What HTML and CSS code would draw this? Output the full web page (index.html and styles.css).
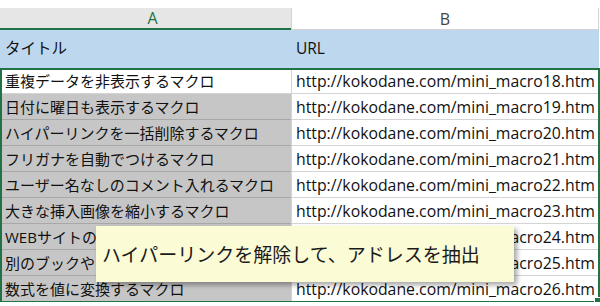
FILE: index.html
```html
<!DOCTYPE html>
<html lang="ja">

<head>
	<meta charset="UTF-8">
	<meta name="viewport" content="width=device-width, initial-scale=1.0">
	<title>ミニマクロ一覧</title>
	<link rel="stylesheet" href="styles.css">
</head>

<body>
	<div class="sheet">
		<div class="col-head col-a">A</div>
		<div class="col-head col-b">B</div>

		<div class="cell title">タイトル</div>
		<div class="cell title col-b">URL</div>

		<div class="cell active">重複データを非表示するマクロ</div>
		<div class="cell col-b">http://kokodane.com/mini_macro18.htm</div>
		<div class="cell sel">日付に曜日も表示するマクロ</div>
		<div class="cell col-b">http://kokodane.com/mini_macro19.htm</div>
		<div class="cell sel">ハイパーリンクを一括削除するマクロ</div>
		<div class="cell col-b">http://kokodane.com/mini_macro20.htm</div>
		<div class="cell sel">フリガナを自動でつけるマクロ</div>
		<div class="cell col-b">http://kokodane.com/mini_macro21.htm</div>
		<div class="cell sel">ユーザー名なしのコメント入れるマクロ</div>
		<div class="cell col-b">http://kokodane.com/mini_macro22.htm</div>
		<div class="cell sel">大きな挿入画像を縮小するマクロ</div>
		<div class="cell col-b">http://kokodane.com/mini_macro23.htm</div>
		<div class="cell sel">WEBサイトのハイパーリンクを解除するマクロ</div>
		<div class="cell col-b">http://kokodane.com/mini_macro24.htm</div>
		<div class="cell sel">別のブックやシートへ転記するマクロ</div>
		<div class="cell col-b">http://kokodane.com/mini_macro25.htm</div>
		<div class="cell sel">数式を値に変換するマクロ</div>
		<div class="cell col-b">http://kokodane.com/mini_macro26.htm</div>

		<!-- selected range A3:A11 -->
		<div class="selection"><span class="handle"></span></div>
	</div>

	<div class="tooltip">ハイパーリンクを解除して、アドレスを抽出</div>
</body>

</html>
```

FILE: styles.css
```css
body {
	font-family: "Open Sans", "Noto Sans CJK JP", sans-serif;
	margin: 0;
	padding: 0;
	background: #fff;
	color: #111;
	position: relative;
	overflow: hidden;
}

.sheet {
	display: grid;
	grid-template-columns: 291px 308px;
	grid-auto-rows: 26px;
	grid-template-rows: 22px 38px;
	padding-top: 8px;
	width: 599px;
	position: relative;
}

.col-head {
	display: flex;
	align-items: center;
	justify-content: center;
	font-size: 16px;
	box-sizing: border-box;
}

.col-head.col-a {
	background: #e6e6e6;
	color: #217346;
	border-bottom: 2px solid #217346;
	padding-left: 14px;
}

.col-head.col-b {
	color: #444;
	border-left: 1px solid #d4d4d4;
	border-right: 1px solid #d4d4d4;
	border-bottom: 1px solid #d4d4d4;
}

.cell {
	display: flex;
	align-items: center;
	box-sizing: border-box;
	padding-left: 5px;
	font-size: 15px;
	white-space: nowrap;
	overflow: hidden;
	border-bottom: 1px solid #d4d4d4;
}

.cell.col-b {
	padding-left: 4px;
	font-size: 15.8px;
	border-left: 1px solid #d4d4d4;
	border-right: 1px solid #d4d4d4;
}

.cell.title {
	background: #bdd7ee;
	border-bottom: 1px solid #bdd7ee;
	padding-bottom: 2px;
	font-size: 15.5px;
}

.cell.title.col-b {
	border-left-color: #bdd7ee;
	border-right-color: #bdd7ee;
}

.cell.sel {
	background: #c6c6c6;
	border-bottom-color: #a8a8a8;
}

/* absolutely placed in the grid area, so it takes no cells */
.selection {
	position: absolute;
	grid-column: 1;
	grid-row: 3 / span 9;
	top: 0;
	left: 0;
	right: -1px;
	bottom: -1px;
	border: 2px solid #217346;
	pointer-events: none;
}

.handle {
	position: absolute;
	right: -4px;
	bottom: -4px;
	width: 6px;
	height: 6px;
	background: #217346;
	border: 1px solid #fff;
}

.tooltip {
	position: absolute;
	left: 96px;
	top: 226px;
	width: 418px;
	height: 56px;
	box-sizing: border-box;
	padding-left: 6px;
	display: flex;
	align-items: center;
	background: #fbfbd6;
	font-size: 19px;
	color: #1a1a1a;
	box-shadow: 3px 3px 5px rgba(0, 0, 0, 0.35);
}
```
